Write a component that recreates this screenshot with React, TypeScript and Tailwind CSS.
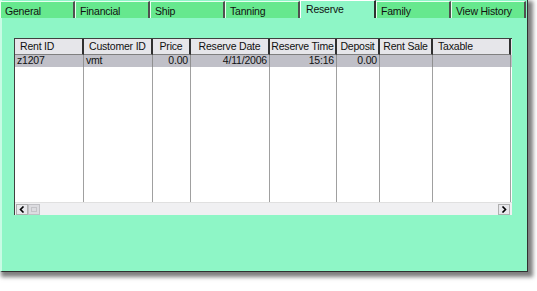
import React from "react";

const tabs = ["General", "Financial", "Ship", "Tanning", "Reserve", "Family", "View History"];

const cols = [
  { name: "Rent ID", w: 69, h: "text-left pl-[5px]" },
  { name: "Customer ID", w: 69, h: "text-left pl-[5px]" },
  { name: "Price", w: 38, h: "text-center" },
  { name: "Reserve Date", w: 79, h: "text-center" },
  { name: "Reserve Time", w: 67, h: "text-center" },
  { name: "Deposit", w: 43, h: "text-center" },
  { name: "Rent Sale", w: 53, h: "text-center" },
  { name: "Taxable", w: 78, h: "text-left pl-[5px]" },
];

const row = [
  { v: "z1207", a: "text-left pl-[2px]" },
  { v: "vmt", a: "text-left pl-[2px]" },
  { v: "0.00", a: "text-right pr-[2px]" },
  { v: "4/11/2006", a: "text-right pr-[2px]" },
  { v: "15:16", a: "text-right pr-[2px]" },
  { v: "0.00", a: "text-right pr-[2px]" },
  { v: "", a: "" },
  { v: "", a: "" },
];

export default function App() {
  return (
    <div
      className="w-[537px] h-[291px] bg-white overflow-hidden text-[10.5px] tracking-[-0.2px] text-[#111]"
      style={{ fontFamily: "Tahoma, 'Liberation Sans', Arial, sans-serif" }}
    >
      <div className="w-[528px] h-[272px] bg-[#8ef6c6] border-l-2 border-l-[#c8fbe4] border-r border-b border-[#303030] shadow-[3px_3px_4px_2px_rgba(0,0,0,0.5)] flex flex-col">
        {/* tabs */}
        <div className="flex h-[18px] items-start -ml-[2px]">
          {tabs.map((t) => {
            const sel = t === "Reserve";
            return (
              <div
                key={t}
                className={
                  sel
                    ? "w-[76px] h-[18px] shrink-0 whitespace-nowrap bg-[#8ef6c6] border-t border-l border-white border-r-2 border-r-[#303030] pl-[5px] pt-[2px] leading-[12px]"
                    : "w-[75px] h-[17px] shrink-0 whitespace-nowrap mt-[1px] bg-[#66e88e] border-t border-l border-[#e8fff0] border-r-2 border-r-[#505050] pl-[4px] pt-[2px] leading-[14px]"
                }
              >
                {t}
              </div>
            );
          })}
        </div>
        {/* body */}
        <div className="flex-1 pl-[12px] pr-[16px] pt-[20px]">
          <div className="w-[498px] h-[177px] bg-white border-t border-l border-[#404040] flex flex-col">
            <div className="flex-1 relative">
              {/* header */}
              <div className="flex h-[16px] bg-[#e6e6ea]">
                {cols.map((c) => (
                  <div
                    key={c.name}
                    style={{ width: c.w }}
                    className={`h-[16px] shrink-0 whitespace-nowrap overflow-hidden leading-[15px] border-r-2 border-b border-r-[#303030] border-b-[#808080] ${c.h}`}
                  >
                    {c.name}
                  </div>
                ))}
              </div>
              {/* row */}
              <div className="flex h-[12px] bg-[#c0c0c8]">
                {row.map((r, i) => (
                  <div
                    key={i}
                    style={{ width: cols[i].w }}
                    className={`h-[12px] shrink-0 whitespace-nowrap overflow-hidden leading-[11px] border-r border-[#909090] ${r.a}`}
                  >
                    {r.v}
                  </div>
                ))}
              </div>
              {/* empty body with column lines */}
              <div className="flex h-[135px]">
                {cols.map((c, i) => (
                  <div
                    key={i}
                    style={{ width: c.w }}
                    className="h-full shrink-0 border-r border-[#a0a0a0]"
                  />
                ))}
              </div>
            </div>
            {/* scrollbar */}
            <div className="h-[13px] flex items-center bg-[#f0f0f2] border-t border-[#e0e0e0] pl-[1px]">
              <div className="w-[12px] h-[11px] bg-[#e8e8ec] border border-[#b0b0b0] flex items-center justify-center">
                <svg width="6" height="7" viewBox="0 0 6 7">
                  <path d="M4.5 0.5 L1.5 3.5 L4.5 6.5" stroke="#000" strokeWidth="1.6" fill="none" />
                </svg>
              </div>
              <div className="w-[12px] h-[11px] bg-[#dcdce0] border border-[#c0c0c4] flex items-center justify-center">
                <div className="w-[6px] h-[5px] border border-[#c4c4c8]" />
              </div>
              <div className="flex-1" />
              <div className="w-[12px] h-[11px] bg-[#e8e8ec] border border-[#b0b0b0] flex items-center justify-center mr-[2px]">
                <svg width="6" height="7" viewBox="0 0 6 7">
                  <path d="M1.5 0.5 L4.5 3.5 L1.5 6.5" stroke="#000" strokeWidth="1.6" fill="none" />
                </svg>
              </div>
            </div>
          </div>
        </div>
      </div>
    </div>
  );
}
